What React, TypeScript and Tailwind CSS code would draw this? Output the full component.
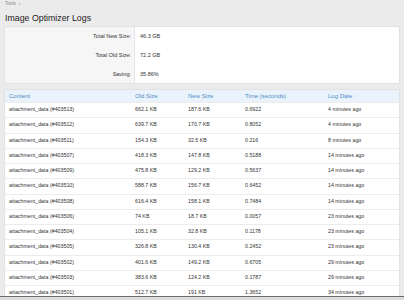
import React from 'react'

const rows = [
  { content: 'attachment_data (#403513)', oldSize: '662.1 KB', newSize: '187.6 KB', time: '0.6922', date: '4 minutes ago' },
  { content: 'attachment_data (#403512)', oldSize: '639.7 KB', newSize: '170.7 KB', time: '0.8052', date: '4 minutes ago' },
  { content: 'attachment_data (#403511)', oldSize: '154.3 KB', newSize: '32.5 KB', time: '0.216', date: '8 minutes ago' },
  { content: 'attachment_data (#403507)', oldSize: '418.3 KB', newSize: '147.8 KB', time: '0.5188', date: '14 minutes ago' },
  { content: 'attachment_data (#403509)', oldSize: '475.8 KB', newSize: '129.2 KB', time: '0.5637', date: '14 minutes ago' },
  { content: 'attachment_data (#403510)', oldSize: '588.7 KB', newSize: '156.7 KB', time: '0.6452', date: '14 minutes ago' },
  { content: 'attachment_data (#403508)', oldSize: '616.4 KB', newSize: '158.1 KB', time: '0.7484', date: '14 minutes ago' },
  { content: 'attachment_data (#403506)', oldSize: '74 KB', newSize: '18.7 KB', time: '0.0057', date: '23 minutes ago' },
  { content: 'attachment_data (#403504)', oldSize: '105.1 KB', newSize: '32.8 KB', time: '0.1178', date: '23 minutes ago' },
  { content: 'attachment_data (#403505)', oldSize: '326.8 KB', newSize: '130.4 KB', time: '0.2452', date: '23 minutes ago' },
  { content: 'attachment_data (#403502)', oldSize: '401.6 KB', newSize: '149.2 KB', time: '0.6705', date: '29 minutes ago' },
  { content: 'attachment_data (#403503)', oldSize: '383.6 KB', newSize: '124.2 KB', time: '0.1787', date: '29 minutes ago' },
  { content: 'attachment_data (#403501)', oldSize: '512.7 KB', newSize: '191 KB', time: '1.3652', date: '34 minutes ago' },
]

const stats = [
  { label: 'Total New Size:', value: '46.3 GB' },
  { label: 'Total Old Size:', value: '72.2 GB' },
  { label: 'Saving:', value: '35.86%' },
]

const cols = 'grid grid-cols-[126px_53px_57px_83px_1fr]'

export default function App() {
  return (
    <div className="relative h-[300px] w-[404px] overflow-hidden bg-[#ebebeb] px-[5px] font-['Liberation_Sans',Arial,sans-serif] text-[#333]">
      {/* Breadcrumb */}
      <div className="flex h-[9px] items-center text-[4.6px] text-[#8a8a8a]">
        Tools <span className="ml-[3px]">›</span>
      </div>

      <h1 className="flex h-[18px] items-center text-[8.8px] leading-none text-[#222]">Image Optimizer Logs</h1>

      {/* Summary */}
      <div className="flex h-[56px] rounded-[1px] bg-white shadow-[0_0_0_1px_#e2e2e2]">
        <div className="w-[130px] border-r border-[#e4e4e4] bg-[#f6f6f6]">
          {stats.map((s) => (
            <div key={s.label} className="flex h-[18.67px] items-center justify-end pr-[3px] text-[5.5px]">
              {s.label}
            </div>
          ))}
        </div>
        <div className="flex-1">
          {stats.map((s) => (
            <div key={s.label} className="flex h-[18.67px] items-center pl-[5px] text-[5.5px]">
              {s.value}
            </div>
          ))}
        </div>
      </div>

      {/* Logs table */}
      <div className="mt-[7px] bg-white shadow-[0_0_0_1px_#e2e2e2]">
        <div className={`${cols} h-[12px] items-center bg-[#eaf3fb] text-[6px] text-[#4b8ec8]`}>
          <div className="pl-[4px]">Content</div>
          <div className="pl-[4px]">Old Size</div>
          <div className="pl-[4px]">New Size</div>
          <div className="pl-[4px]">Time (seconds)</div>
          <div className="pl-[4px]">Log Date</div>
        </div>
        {rows.map((r) => (
          <div key={r.content} className={`${cols} h-[15.25px] items-center border-t border-[#ececec] text-[5.3px]`}>
            <div className="pl-[4px]">{r.content}</div>
            <div className="pl-[4px]">{r.oldSize}</div>
            <div className="pl-[4px]">{r.newSize}</div>
            <div className="pl-[4px]">{r.time}</div>
            <div className="pl-[4px]">{r.date}</div>
          </div>
        ))}
      </div>

      {/* bottom edge of the viewport toolbar */}
      <div className="absolute left-0 right-0 top-[296px] h-[1px] bg-[#6b6b6b]" />
      <div className="absolute bottom-0 left-0 right-0 top-[297px] bg-[#dcdcdc]" />
    </div>
  )
}
